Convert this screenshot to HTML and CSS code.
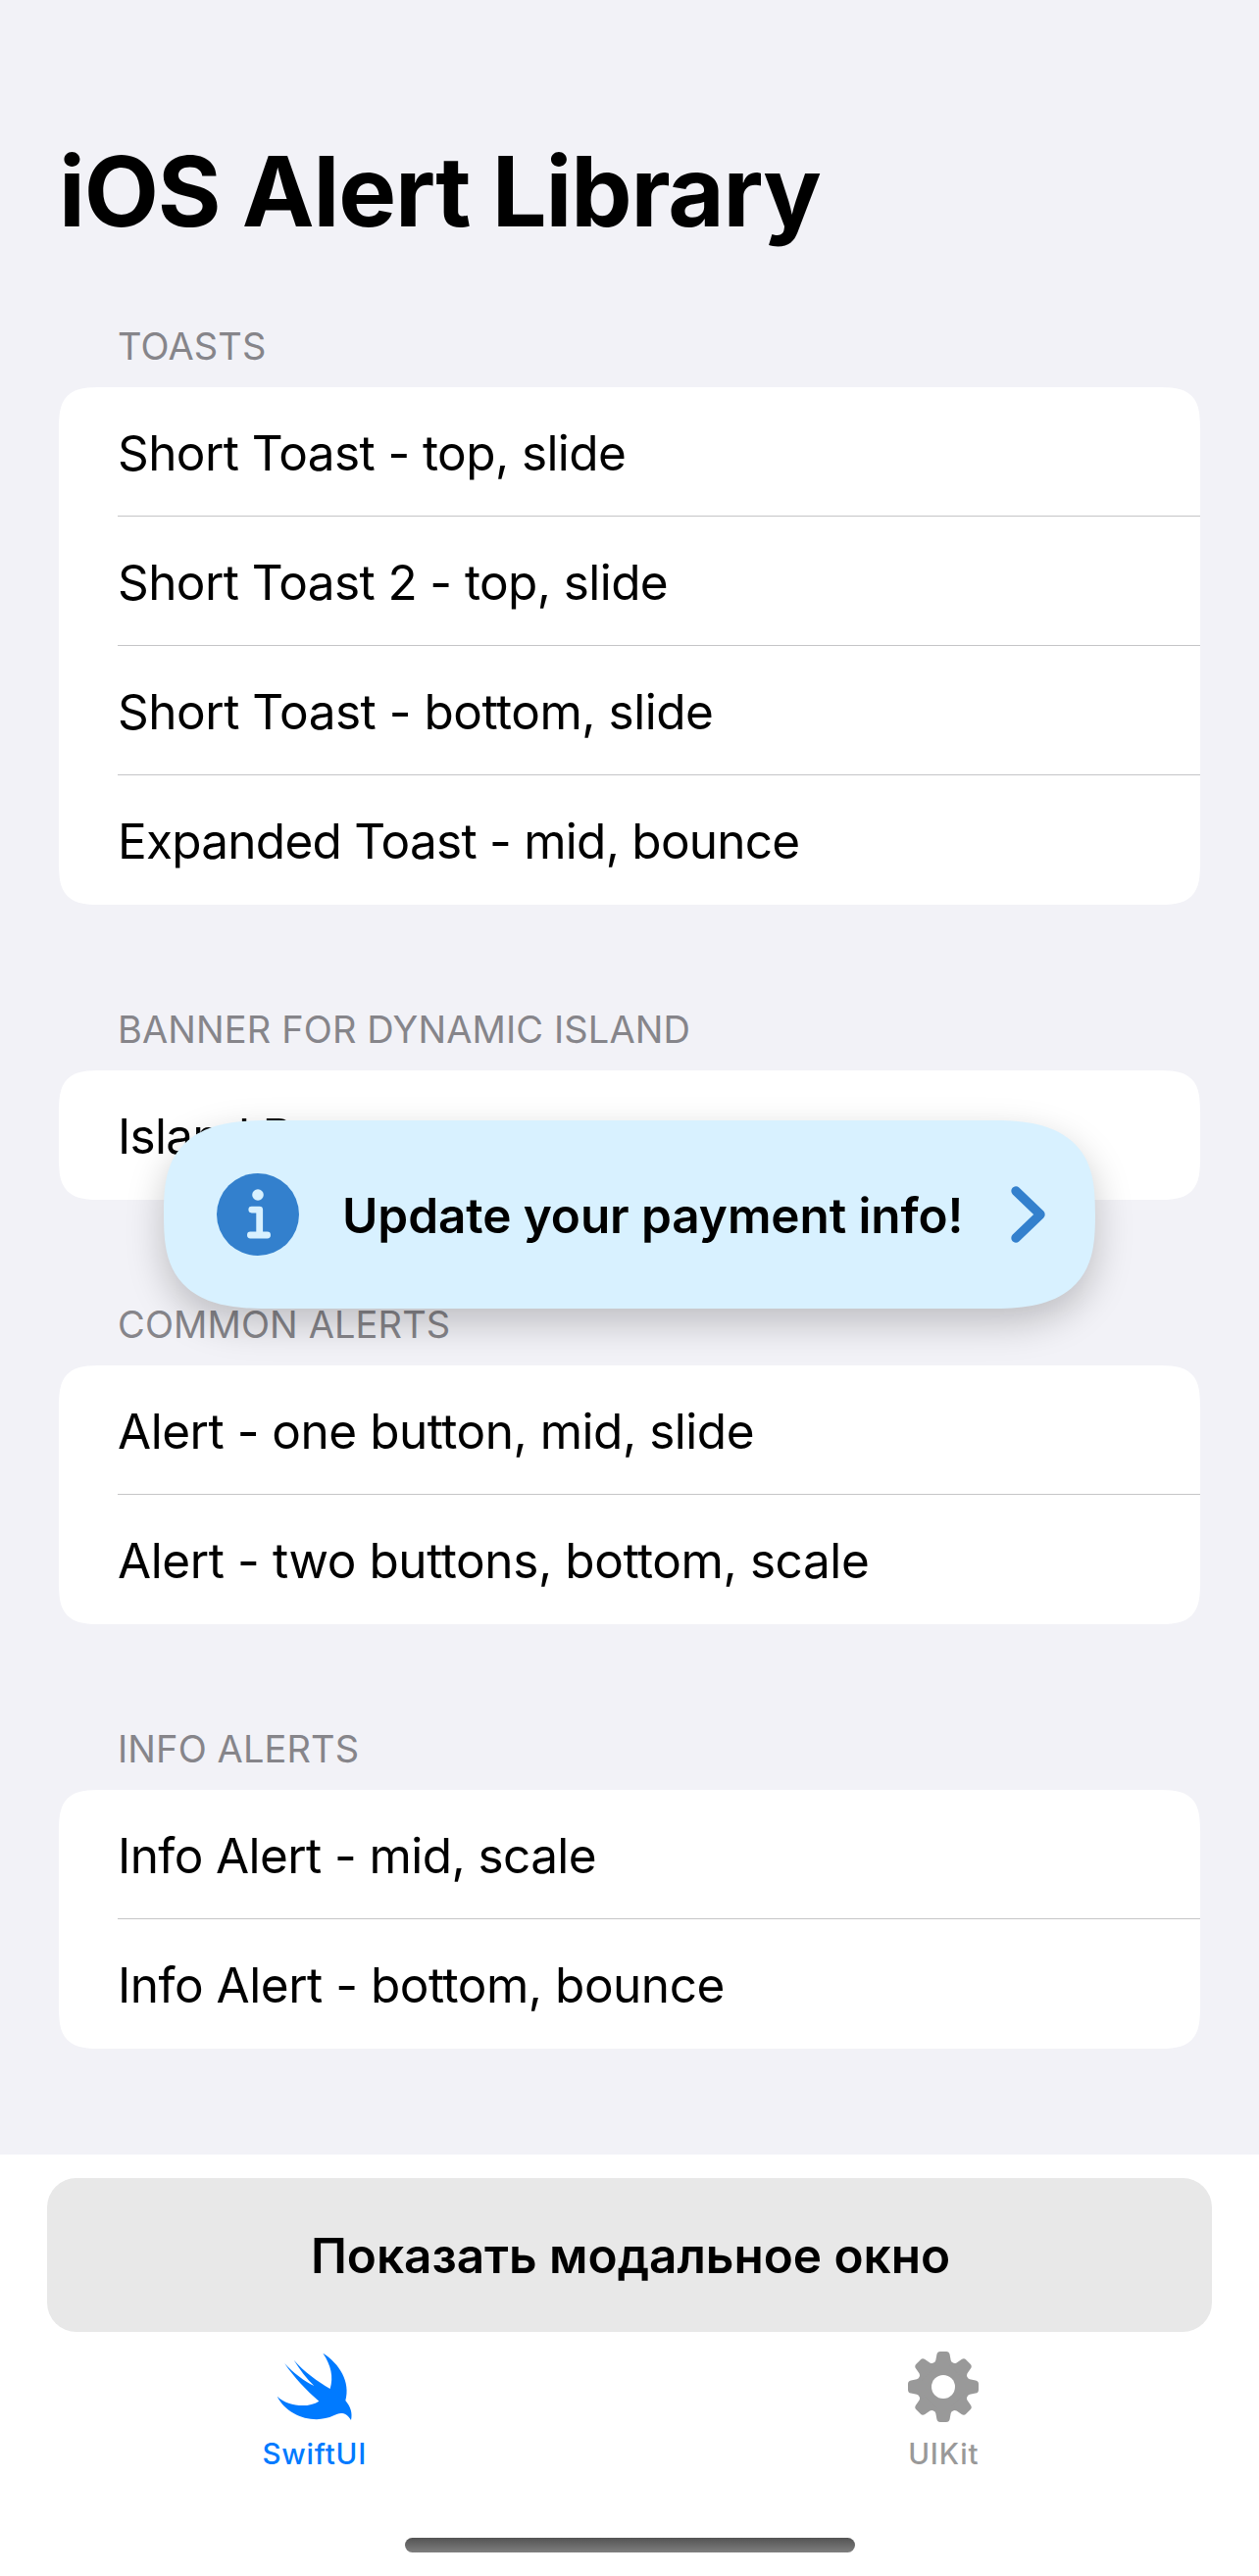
FILE: index.html
```html
<!DOCTYPE html>
<html lang="en">
<head>
<meta charset="utf-8">
<title>iOS Alert Library</title>
<link rel="stylesheet" href="styles.css">
</head>
<body>
<div class="screen">
  <main class="content">
    <h1 class="title">iOS Alert Library</h1>

    <section class="group">
      <h2 class="group-title">TOASTS</h2>
      <ul class="card">
        <li class="row row--tight">Short Toast - top, slide</li>
        <li class="row row--tight">Short Toast 2 - top, slide</li>
        <li class="row">Short Toast - bottom, slide</li>
        <li class="row row--tighter">Expanded Toast - mid, bounce</li>
      </ul>
    </section>

    <section class="group">
      <h2 class="group-title">BANNER FOR DYNAMIC ISLAND</h2>
      <ul class="card">
        <li class="row row--tighter">Island Banner</li>
      </ul>
    </section>

    <section class="group">
      <h2 class="group-title">COMMON ALERTS</h2>
      <ul class="card">
        <li class="row">Alert - one button, mid, slide</li>
        <li class="row row--loose">Alert - two buttons, bottom, scale</li>
      </ul>
    </section>

    <section class="group">
      <h2 class="group-title">INFO ALERTS</h2>
      <ul class="card">
        <li class="row row--tight">Info Alert - mid, scale</li>
        <li class="row">Info Alert - bottom, bounce</li>
      </ul>
    </section>
  </main>

  <footer class="bottom">
    <button class="action" type="button">Показать модальное окно</button>
    <nav class="tabs">
      <a class="tab tab--active">
        <svg class="tab-icon" viewBox="104 57 216 216" aria-hidden="true">
          <path fill="currentColor" d="M97 194C128 224 190 232 225 209C188 178 148 135 120 94C146 122 182 150 210 162C186 139 165 110 148 83C178 118 222 149 259 171C270 135 262 99 237 62C288 94 322 150 306 207C322 226 328 246 323 267C307 240 287 243 270 253C212 281 128 256 97 194Z"/>
        </svg>
        <span class="tab-label">SwiftUI</span>
      </a>
      <a class="tab">
        <svg class="tab-icon" viewBox="-36 -36 72 72" aria-hidden="true">
          <defs>
            <path id="tooth" d="M-11.5-20L-10.5-24Q-8.2-25-7.7-27L-6.6-33Q-6-36-3-36H3Q6-36 6.6-33L7.7-27Q8.2-25 10.5-24L11.5-20Z"/>
            <mask id="hub"><rect x="-36" y="-36" width="72" height="72" fill="#fff"/><circle r="12" fill="#000"/></mask>
          </defs>
          <g fill="currentColor" mask="url(#hub)">
            <circle r="25.8"/>
            <use href="#tooth"/>
            <use href="#tooth" transform="rotate(45)"/>
            <use href="#tooth" transform="rotate(90)"/>
            <use href="#tooth" transform="rotate(135)"/>
            <use href="#tooth" transform="rotate(180)"/>
            <use href="#tooth" transform="rotate(225)"/>
            <use href="#tooth" transform="rotate(270)"/>
            <use href="#tooth" transform="rotate(315)"/>
          </g>
        </svg>
        <span class="tab-label">UIKit</span>
      </a>
    </nav>
    <div class="home-indicator"></div>
  </footer>

  <div class="toast">
    <svg class="toast-info" viewBox="-42 -42 84 84" aria-hidden="true">
      <circle r="42" fill="#3380cd"/>
      <circle cy="-20" r="5.8" fill="#d8f1ff"/>
      <path d="M-6.2-4.9H1.7V21M-7.6 21H9.6" fill="none" stroke="#d8f1ff" stroke-width="6.8" stroke-linecap="round" stroke-linejoin="round"/>
    </svg>
    <span class="toast-text">Update your payment info!</span>
    <svg class="toast-chevron" viewBox="0 0 35 58" aria-hidden="true">
      <path d="M5 5L30 29L5 53" fill="none" stroke="#3380cd" stroke-width="9.4" stroke-linecap="round" stroke-linejoin="round"/>
    </svg>
  </div>
</div>
</body>
</html>
```
FILE: styles.css
```css
* {
  box-sizing: border-box;
}

body {
  margin: 0;
  font-family: Inter, "Liberation Sans", sans-serif;
  color: #000;
  background: #f2f2f7;
}

.screen {
  position: relative;
  display: flex;
  flex-direction: column;
  width: 1284px;
  height: 2628px;
  overflow: hidden;
}

.content {
  display: flex;
  flex-direction: column;
  height: 2198px;
  padding: 135px 60px 0;
}

.title {
  margin: 0 0 74px;
  font-size: 99px;
  font-weight: 700;
  line-height: 120px;
  letter-spacing: -1.14px;
}

.group {
  margin-bottom: 103px;
}

.group-title {
  margin: 0 0 18px;
  padding-left: 60px;
  font-size: 38px;
  font-weight: 400;
  line-height: 48px;
  letter-spacing: 0.12px;
  color: #86858a;
}

.card {
  margin: 0;
  padding: 0 0 0 60px;
  list-style: none;
  background: #fff;
  border-radius: 30px;
}

.row {
  height: 132px;
  padding-top: 2px;
  border-bottom: 1px solid #c5c5c7;
  font-size: 49.5px;
  line-height: 130px;
  letter-spacing: -0.48px;
  white-space: nowrap;
}

.row:last-child {
  border-bottom: 0;
}

.row--tight {
  letter-spacing: -0.59px;
}

.row--tighter {
  letter-spacing: -0.75px;
}

.row--loose {
  letter-spacing: -0.41px;
}

.bottom {
  display: flex;
  flex-direction: column;
  align-items: center;
  height: 430px;
  padding-top: 24px;
  background: #fff;
}

.action {
  width: 1188px;
  height: 157px;
  padding: 1px 0 0 2px;
  border: 0;
  border-radius: 30px;
  background: #e8e8e8;
  color: #000;
  font: 600 49.5px Inter, "Liberation Sans", sans-serif;
  letter-spacing: -0.04px;
}

.tabs {
  display: flex;
  width: 100%;
  margin-top: 20px;
  padding-right: 1px;
}

.tab {
  display: flex;
  flex: 1;
  flex-direction: column;
  align-items: center;
  gap: 14px;
  color: #999;
}

.tab--active {
  color: #007aff;
}

.tab-icon {
  width: 72px;
  height: 72px;
  overflow: visible;
}

.tab-label {
  font-size: 29.5px;
  font-weight: 500;
  line-height: 36px;
  letter-spacing: 0.8px;
}

.home-indicator {
  width: 459px;
  height: 15px;
  margin-top: 68px;
  border-radius: 7.5px;
  background: linear-gradient(#535353, #7f7f7f);
}

.toast {
  position: absolute;
  top: 1143px;
  left: 167px;
  display: flex;
  align-items: center;
  width: 950px;
  height: 192px;
  padding-left: 54px;
  border-radius: 80px;
  background: #d8f1ff;
  box-shadow: 0 15px 38px rgba(0, 0, 0, 0.22);
}

.toast-info {
  width: 84px;
  height: 84px;
}

.toast-text {
  width: 726px;
  padding: 2px 0 0 44px;
  font-size: 49.5px;
  font-weight: 600;
  letter-spacing: -0.09px;
  white-space: nowrap;
}

.toast-chevron {
  width: 35px;
  height: 58px;
}

/* Continuous corners where the browser can draw them */
@supports (corner-shape: superellipse(1.7)) {
  .card {
    border-radius: 46px;
    corner-shape: superellipse(1.7);
  }

  .toast {
    border-radius: 112px / 96px;
    corner-shape: superellipse(1.5);
  }
}
```
